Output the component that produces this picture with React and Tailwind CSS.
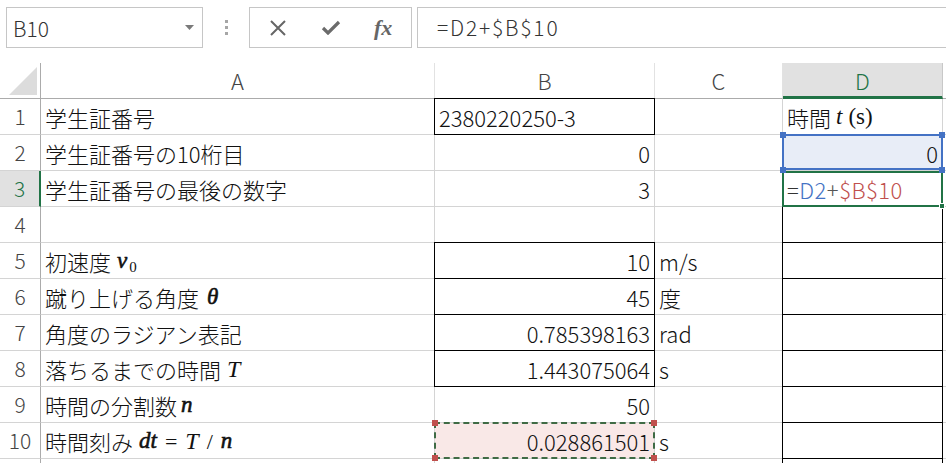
import React from 'react';

const JP = "font-['Noto_Sans_CJK_JP','Noto_Sans',sans-serif]";
const SERIF = "font-['Liberation_Serif',serif] italic";
// Cambria Math style italics: a bit heavier than plain Times italic
const MATH = `${SERIF} [-webkit-text-stroke:0.6px_#111]`;

// one spreadsheet cell; overlay = borders / selection drawn over the gridlines
const Cell = ({ children, right, className = '', overlay }) => (
  <div
    className={`relative flex h-[36px] items-center whitespace-nowrap border-b border-r border-[#d4d4d4] px-[4px] pt-[1px] text-[22px] text-[#111] ${
      right ? 'justify-end' : 'justify-start'
    } ${className}`}
  >
    {children}
    {overlay}
  </div>
);

const BlackBox = () => <div className="pointer-events-none absolute -left-px -top-px bottom-[-1px] right-[-1px] z-10 border border-black" />;

const DBox = () => <div className="pointer-events-none absolute -left-px -top-px bottom-[-1px] right-[-1px] z-10 border-x border-b border-black" />;

const Handle = ({ className }) => <div className={`absolute z-30 h-[6px] w-[6px] ${className}`} />;

const RowHead = ({ n, active }) => (
  <div
    className={`flex h-[36px] items-center justify-center border-b text-[21px] ${
      active
        ? 'border-[#d4d4d4] border-r-2 border-r-[#217346] bg-[#e1e1e1] text-[#217346]'
        : 'border-[#d4d4d4] border-r border-r-[#ababab] text-[#444]'
    }`}
  >
    {n}
  </div>
);

const Empty = () => <Cell />;

export default function App() {
  return (
    <div className={`h-[463px] w-[946px] overflow-hidden bg-white ${JP} font-light`}>
      {/* name box + formula bar */}
      <div className="flex h-[63px] items-start pl-[6px] pt-[7px]">
        <div className="flex h-[41px] w-[197px] items-center justify-between border border-[#c6c6c6] pl-[6px] pr-[8px]">
          <span className="pt-[2px] text-[21px] text-[#333]">B10</span>
          <svg width="9" height="5" viewBox="0 0 9 5">
            <path d="M0 0h9L4.5 5z" fill="#7a7a7a" />
          </svg>
        </div>
        <div className="flex h-[41px] w-[46px] flex-col items-center justify-center gap-[3px]">
          <div className="h-[3px] w-[3px] bg-[#a6a6a6]" />
          <div className="h-[3px] w-[3px] bg-[#a6a6a6]" />
          <div className="h-[3px] w-[3px] bg-[#a6a6a6]" />
        </div>
        <div className="flex h-[41px] w-[163px] items-center border border-[#c6c6c6]">
          <div className="flex w-[56px] justify-center">
            <svg width="18" height="16" viewBox="0 0 18 16">
              <path d="M2 1l14 14M16 1L2 15" stroke="#666" strokeWidth="2" fill="none" />
            </svg>
          </div>
          <div className="flex w-[50px] justify-center">
            <svg width="20" height="15" viewBox="0 0 20 15">
              <path d="M2 8l5 5L18 2" stroke="#6b6b6b" strokeWidth="3.2" fill="none" />
            </svg>
          </div>
          <div className="flex w-[56px] justify-center">
            <span className={`${SERIF} text-[22px] font-bold text-[#666]`}>fx</span>
          </div>
        </div>
        <div className="ml-[5px] flex h-[41px] flex-1 items-center border border-r-0 border-[#c6c6c6] pl-[19px] pt-[1px] text-[21px] tracking-[1.8px] text-[#333]">
          =D2+$B$10
        </div>
      </div>

      {/* column headers */}
      <div className="grid grid-cols-[41px_394px_220px_128px_160px_1fr]">
        <div className="relative flex h-[36px] items-end justify-end border-b border-r border-[#ababab] pb-[3px] pr-[3px]">
          <svg width="28" height="28" viewBox="0 0 28 28">
            <path d="M28 0v28H0z" fill="#dcdcdc" />
          </svg>
        </div>
        {['A', 'B', 'C'].map((c) => (
          <div key={c} className="flex h-[36px] items-center justify-center border-b border-r border-b-[#ababab] border-r-[#e2e2e2] text-[22px] text-[#444]">
            {c}
          </div>
        ))}
        <div className="flex h-[36px] items-center justify-center border-b-[3px] border-r border-b-[#217346] border-r-[#c8c8c8] bg-[#e1e1e1] pt-[2px] text-[22px] text-[#217346]">
          D
        </div>
        <div className="h-[36px] border-b border-[#ababab]" />
      </div>

      {/* rows */}
      <div className="grid grid-cols-[41px_394px_220px_128px_160px_1fr]">
        {/* 1 */}
        <RowHead n="1" />
        <Cell>学生証番号</Cell>
        <Cell overlay={<BlackBox />}>2380220250-3</Cell>
        <Empty />
        <Cell>
          時間 <span className={`${SERIF} ml-[5px] text-[23px]`}>t</span>
          <span className="ml-[6px] font-['Liberation_Serif',serif] text-[23px]">(s)</span>
        </Cell>
        <Empty />

        {/* 2 */}
        <RowHead n="2" />
        <Cell>学生証番号の10桁目</Cell>
        <Cell right>0</Cell>
        <Empty />
        <Cell
          right
          className="bg-[#e8edf7]"
          overlay={
            <>
              <div className="absolute -left-px -top-px bottom-0 right-[-1px] z-20 border-2 border-[#4472c4]" />
              <Handle className="-left-[3px] -top-[3px] bg-[#4472c4]" />
              <Handle className="-right-[3px] -top-[3px] bg-[#4472c4]" />
              <Handle className="-bottom-[3px] -left-[3px] bg-[#4472c4]" />
              <Handle className="-bottom-[3px] -right-[3px] bg-[#4472c4]" />
            </>
          }
        >
          0
        </Cell>
        <Empty />

        {/* 3 */}
        <RowHead n="3" active />
        <Cell>学生証番号の最後の数字</Cell>
        <Cell right>3</Cell>
        <Empty />
        <Cell
          className="tracking-[0.5px]"
          overlay={
            <>
              <div className="absolute -left-px top-0 bottom-[-1px] right-[-1px] z-20 border-2 border-[#217346]" />
              <div className="absolute -bottom-[3px] -right-[3px] z-30 h-[6px] w-[6px] border border-white bg-[#217346]" />
            </>
          }
        >
          <span className="text-[#333]">=</span>
          <span className="text-[#4472c4]">D2</span>
          <span className="text-[#555]">+</span>
          <span className="text-[#c0504d]">$B$10</span>
        </Cell>
        <Empty />

        {/* 4 */}
        <RowHead n="4" />
        <Empty />
        <Empty />
        <Empty />
        <Cell overlay={<DBox />} />
        <Empty />

        {/* 5 */}
        <RowHead n="5" />
        <Cell>
          初速度
          <span className={`${MATH} ml-[6px] text-[23px]`}>v</span>
          <span className="ml-[2px] mt-[12px] font-['Liberation_Serif',serif] text-[15px]">0</span>
        </Cell>
        <Cell right overlay={<BlackBox />}>10</Cell>
        <Cell>m/s</Cell>
        <Cell overlay={<DBox />} />
        <Empty />

        {/* 6 */}
        <RowHead n="6" />
        <Cell>
          蹴り上げる角度
          <span className={`${MATH} ml-[8px] text-[23px]`}>θ</span>
        </Cell>
        <Cell right overlay={<BlackBox />}>45</Cell>
        <Cell>度</Cell>
        <Cell overlay={<DBox />} />
        <Empty />

        {/* 7 */}
        <RowHead n="7" />
        <Cell>角度のラジアン表記</Cell>
        <Cell right overlay={<BlackBox />}>0.785398163</Cell>
        <Cell>rad</Cell>
        <Cell overlay={<DBox />} />
        <Empty />

        {/* 8 */}
        <RowHead n="8" />
        <Cell>
          落ちるまでの時間
          <span className={`${SERIF} ml-[6px] text-[24px]`}>T</span>
        </Cell>
        <Cell right overlay={<BlackBox />}>1.443075064</Cell>
        <Cell>s</Cell>
        <Cell overlay={<DBox />} />
        <Empty />

        {/* 9 */}
        <RowHead n="9" />
        <Cell>
          時間の分割数
          <span className={`${MATH} ml-[4px] text-[23px]`}>n</span>
        </Cell>
        <Cell right>50</Cell>
        <Empty />
        <Cell overlay={<DBox />} />
        <Empty />

        {/* 10 */}
        <RowHead n="10" />
        <Cell>
          時間刻み
          <span className={`${MATH} ml-[6px] text-[23px]`}>dt</span>
          <span className="ml-[8px] font-['Liberation_Serif',serif] text-[22px]">=</span>
          <span className={`${SERIF} ml-[8px] text-[24px]`}>T</span>
          <span className="ml-[8px] font-['Liberation_Serif',serif] text-[22px]">/</span>
          <span className={`${MATH} ml-[8px] text-[23px]`}>n</span>
        </Cell>
        <Cell
          right
          className="bg-[#f9e8e7]"
          overlay={
            <>
              <div className="absolute -left-px -top-px bottom-[-1px] right-[-1px] z-20 border-2 border-dashed border-[#3f6b45]" />
              <Handle className="-left-[3px] -top-[3px] bg-[#c0504d]" />
              <Handle className="-right-[3px] -top-[3px] bg-[#c0504d]" />
              <Handle className="-bottom-[3px] -left-[3px] bg-[#c0504d]" />
              <Handle className="-bottom-[3px] -right-[3px] bg-[#c0504d]" />
            </>
          }
        >
          0.028861501
        </Cell>
        <Cell>s</Cell>
        <Cell overlay={<DBox />} />
        <Empty />

        {/* 11: only the top edge is in view */}
        <RowHead n="" />
        <Empty />
        <Empty />
        <Empty />
        <Cell overlay={<DBox />} />
        <Empty />
      </div>
    </div>
  );
}
